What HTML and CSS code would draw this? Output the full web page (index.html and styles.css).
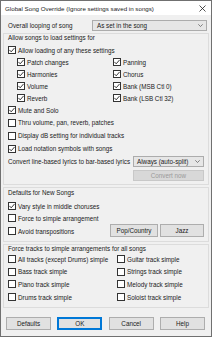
FILE: index.html
```html
<!DOCTYPE html>
<html lang="en">
<head>
  <meta charset="UTF-8">
  <title>Global Song Override</title>
  <link rel="stylesheet" href="styles.css">
</head>
<body>
  <div class="dialog">
    <div class="titlebar">
      <span>Global Song Override (Ignore settings saved in songs)</span>
      <svg class="close" width="7" height="7" viewBox="0 0 7 7"><path d="M0.5 0.5L6.5 6.5M6.5 0.5L0.5 6.5" stroke="#222" stroke-width="0.8"/></svg>
    </div>
    <div class="content">
      <div class="row top-row">
        <span class="label">Overall looping of song</span>
        <div class="select wide">
          <span>As set in the song</span>
          <svg width="5" height="3" viewBox="0 0 5 3"><path d="M0.3 0.3L2.5 2.5L4.7 0.3" fill="none" stroke="#555" stroke-width="0.7"/></svg>
        </div>
      </div>

      <div class="group g1">
        <div class="group-title">Allow songs to load settings for</div>
        <label class="chk r12"><span class="box"><svg viewBox="0 0 6 6"><path d="M0.4 2.9L2.2 4.8L5.6 0.9"/></svg></span>Allow loading of any these settings</label>
        <div class="sub-grid">
          <label class="chk"><span class="box"><svg viewBox="0 0 6 6"><path d="M0.4 2.9L2.2 4.8L5.6 0.9"/></svg></span>Patch changes</label>
          <label class="chk"><span class="box"><svg viewBox="0 0 6 6"><path d="M0.4 2.9L2.2 4.8L5.6 0.9"/></svg></span>Panning</label>
          <label class="chk"><span class="box"><svg viewBox="0 0 6 6"><path d="M0.4 2.9L2.2 4.8L5.6 0.9"/></svg></span>Harmonies</label>
          <label class="chk"><span class="box"><svg viewBox="0 0 6 6"><path d="M0.4 2.9L2.2 4.8L5.6 0.9"/></svg></span>Chorus</label>
          <label class="chk"><span class="box"><svg viewBox="0 0 6 6"><path d="M0.4 2.9L2.2 4.8L5.6 0.9"/></svg></span>Volume</label>
          <label class="chk"><span class="box"><svg viewBox="0 0 6 6"><path d="M0.4 2.9L2.2 4.8L5.6 0.9"/></svg></span>Bank (MSB Ctl 0)</label>
          <label class="chk"><span class="box"><svg viewBox="0 0 6 6"><path d="M0.4 2.9L2.2 4.8L5.6 0.9"/></svg></span>Reverb</label>
          <label class="chk"><span class="box"><svg viewBox="0 0 6 6"><path d="M0.4 2.9L2.2 4.8L5.6 0.9"/></svg></span>Bank (LSB Ctl 32)</label>
        </div>
        <label class="chk r12"><span class="box"><svg viewBox="0 0 6 6"><path d="M0.4 2.9L2.2 4.8L5.6 0.9"/></svg></span>Mute and Solo</label>
        <label class="chk r13"><span class="box"></span>Thru volume, pan, reverb, patches</label>
        <label class="chk r13"><span class="box"></span>Display dB setting for individual tracks</label>
        <label class="chk r13"><span class="box"><svg viewBox="0 0 6 6"><path d="M0.4 2.9L2.2 4.8L5.6 0.9"/></svg></span>Load notation symbols with songs</label>
        <div class="row lyrics-row">
          <span class="label">Convert line-based lyrics to bar-based lyrics</span>
          <div class="select narrow">
            <span>Always (auto-split)</span>
            <svg width="5" height="3" viewBox="0 0 5 3"><path d="M0.3 0.3L2.5 2.5L4.7 0.3" fill="none" stroke="#555" stroke-width="0.7"/></svg>
          </div>
        </div>
        <div class="row convert-row">
          <button class="btn disabled convert">Convert now</button>
        </div>
      </div>

      <div class="group g2">
        <div class="group-title">Defaults for New Songs</div>
        <label class="chk vary"><span class="box"><svg viewBox="0 0 6 6"><path d="M0.4 2.9L2.2 4.8L5.6 0.9"/></svg></span>Vary style in middle choruses</label>
        <div class="split">
          <div class="split-left">
            <label class="chk r12"><span class="box"></span>Force to simple arrangement</label>
            <label class="chk r14"><span class="box"></span>Avoid transpositions</label>
          </div>
          <div class="split-right">
            <button class="btn pop">Pop/Country</button>
            <button class="btn jazz">Jazz</button>
          </div>
        </div>
      </div>

      <div class="group g3">
        <div class="group-title">Force tracks to simple arrangements for all songs</div>
        <div class="track-grid">
          <label class="chk"><span class="box"></span>All tracks (except Drums) simple</label>
          <label class="chk"><span class="box"></span>Guitar track simple</label>
          <label class="chk"><span class="box"></span>Bass track simple</label>
          <label class="chk"><span class="box"></span>Strings track simple</label>
          <label class="chk"><span class="box"></span>Piano track simple</label>
          <label class="chk"><span class="box"></span>Melody track simple</label>
          <label class="chk"><span class="box"></span>Drums track simple</label>
          <label class="chk"><span class="box"></span>Soloist track simple</label>
        </div>
      </div>

      <div class="footer">
        <button class="btn">Defaults</button>
        <button class="btn default">OK</button>
        <button class="btn">Cancel</button>
        <button class="btn">Help</button>
      </div>
    </div>
  </div>
</body>
</html>
```

FILE: styles.css
```css
* {
  margin: 0;
  padding: 0;
  box-sizing: border-box;
}
body {
  width: 212px;
  height: 337px;
  overflow: hidden;
  background: #f0f0f0;
  font-family: 'Liberation Sans', Arial, sans-serif;
  font-size: 6.3px;
  color: #1a1a1a;
}
.dialog {
  width: 212px;
  height: 337px;
  border: 1px solid #707070;
  background: #f0f0f0;
  display: flex;
  flex-direction: column;
}
.titlebar {
  height: 14px;
  background: #fff;
  display: flex;
  align-items: center;
  justify-content: space-between;
  padding: 0 5px 0 4px;
  font-size: 6.2px;
  white-space: nowrap;
}
.close {
  display: block;
}
.content {
  padding: 0 2px;
  display: flex;
  flex-direction: column;
}
.row {
  display: flex;
  align-items: center;
  justify-content: space-between;
}
.label {
  white-space: nowrap;
}
.top-row {
  height: 11px;
  margin-top: 5px;
  padding: 0 2px 0 5px;
}
.select {
  height: 11px;
  background: #e6e6e6;
  border: 1px solid #acacac;
  display: flex;
  align-items: center;
  justify-content: space-between;
  padding: 0 3px 0 4px;
  white-space: nowrap;
}
.select.wide {
  width: 115px;
}
.select.narrow {
  width: 71px;
  padding-left: 3px;
}
.group {
  border: 1px solid #dcdcdc;
  padding: 0 4px 3px 4px;
  display: flex;
  flex-direction: column;
}
.g1 {
  margin-top: 2px;
}
.g2,
.g3 {
  margin-top: 2px;
}
.group-title {
  height: 8px;
  line-height: 8px;
  white-space: nowrap;
}
.g2 .group-title {
  margin-top: 1px;
}
.chk {
  display: flex;
  align-items: center;
  white-space: nowrap;
  height: 12px;
}
.r12 { height: 12px; }
.r13 { height: 13px; }
.r14 { height: 14px; }
.g1 .r12:first-of-type {
  margin-top: 2px;
}
.box {
  width: 8px;
  height: 8px;
  flex: none;
  background: #fff;
  border: 1px solid #333;
  margin-right: 2px;
}
.box svg {
  display: block;
  width: 6px;
  height: 6px;
  fill: none;
  stroke: #222;
  stroke-width: 0.9;
}
.sub-grid {
  display: grid;
  grid-template-columns: 96px 1fr;
  margin-left: 9px;
}
.lyrics-row {
  height: 11px;
  margin-top: 1px;
}
.convert-row {
  justify-content: flex-end;
  margin-top: 3px;
}
.btn {
  height: 13px;
  background: #e1e1e1;
  border: 1px solid #adadad;
  font-family: inherit;
  font-size: 6.3px;
  color: #1a1a1a;
}
.btn.disabled {
  background: #d8d8d8;
  border-color: #c8c8c8;
  color: #9a9a9a;
}
.convert {
  width: 71px;
  height: 11px;
}
.vary {
  margin-top: 3px;
}
.split {
  display: flex;
  justify-content: space-between;
  align-items: flex-end;
}
.split-right {
  display: flex;
  gap: 2px;
  margin-bottom: 1px;
}
.pop {
  width: 48px;
}
.jazz {
  width: 44px;
}
.track-grid {
  display: grid;
  grid-template-columns: 109px 1fr;
  grid-auto-rows: 12.7px;
}
.footer {
  display: flex;
  justify-content: space-between;
  margin-top: 9px;
  padding: 0 4px 0 3px;
}
.footer .btn {
  width: 45px;
}
.btn.default {
  border-color: #0078d7;
  box-shadow: inset 0 0 0 1px #0078d7;
}
```
